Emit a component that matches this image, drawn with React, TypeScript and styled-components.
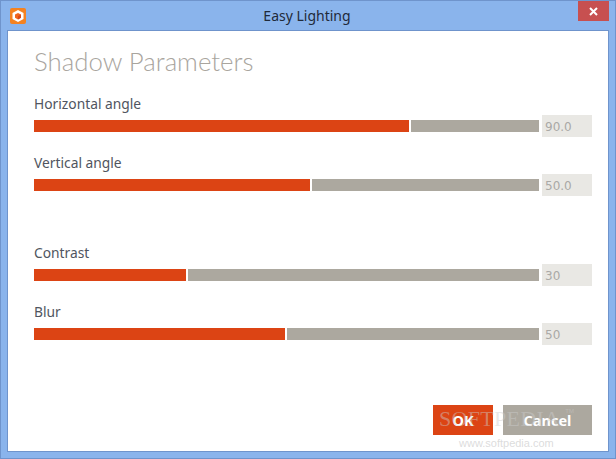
import React from 'react'
import styled, { createGlobalStyle } from 'styled-components'

const GlobalStyle = createGlobalStyle`
  html, body {
    margin: 0;
    padding: 0;
    background: #8ab4ec;
  }
`

type SliderProps = {
  label: string
  percent: number
  value: string
}

const Slider = (props: SliderProps) => (
  <SliderRow>
    <SliderLabel>{props.label}</SliderLabel>
    <SliderLine>
      <Track>
        <TrackFill style={{ width: `${props.percent}px` }} />
        <TrackRest />
      </Track>
      <ValueBox>{props.value}</ValueBox>
    </SliderLine>
  </SliderRow>
)

const App = () => {
  return (
    <>
      <GlobalStyle />
      <Window>
        <TitleBar>
          <AppIcon viewBox="0 0 16 16">
            <rect width="16" height="16" rx="2" fill="#f58220" />
            <path d="M8 2 L13.5 5 V11 L8 14 L2.5 11 V5 Z" fill="#ffffff" />
            <path d="M8 5 L11 6.6 V9.8 L8 11.6 L5 9.8 V6.6 Z" fill="#f0641e" />
            <path d="M8 8.2 L11 6.6 V9.8 L8 11.6 Z" fill="#d8481a" />
          </AppIcon>
          <Title>Easy Lighting</Title>
          <CloseButton>
            <svg width="9" height="9" viewBox="0 0 9 9">
              <path d="M1 1 L8 8 M8 1 L1 8" stroke="#ffffff" strokeWidth="2" />
            </svg>
          </CloseButton>
        </TitleBar>
        <Content>
          <Heading>Shadow Parameters</Heading>
          <SliderGroup>
            <Slider label="Horizontal angle" percent={375} value="90.0" />
            <Slider label="Vertical angle" percent={276} value="50.0" />
          </SliderGroup>
          <SliderGroup>
            <Slider label="Contrast" percent={152} value="30" />
            <Slider label="Blur" percent={251} value="50" />
          </SliderGroup>
          <Buttons>
            <DialogButton $primary>OK</DialogButton>
            <DialogButton>Cancel</DialogButton>
          </Buttons>
          <Watermark>
            <WatermarkName>SOFTPEDIA<WatermarkMark>TM</WatermarkMark></WatermarkName>
            <WatermarkUrl>www.softpedia.com</WatermarkUrl>
          </Watermark>
        </Content>
      </Window>
    </>
  )
}

const Window = styled.div`
  width: 616px;
  height: 459px;
  box-sizing: border-box;
  background: #8ab4ec;
  border: 1px solid #6f94cc;
  padding: 0 6px 6px;
  display: flex;
  flex-direction: column;
`

const TitleBar = styled.div`
  height: 29px;
  flex: none;
  display: flex;
  align-items: center;
  position: relative;
  padding-left: 3px;
`

const AppIcon = styled.svg`
  width: 16px;
  height: 16px;
  margin-top: 1px;
`

const Title = styled.div`
  flex: 1;
  text-align: center;
  font-family: "Noto Sans", "Liberation Sans", sans-serif;
  font-size: 14px;
  color: #1f2a3a;
  margin-right: 21px;
`

const CloseButton = styled.div`
  position: absolute;
  top: 0;
  right: 0;
  width: 31px;
  height: 20px;
  background: #c75050;
  display: flex;
  align-items: center;
  justify-content: center;
`

const Content = styled.div`
  flex: 1;
  background: #ffffff;
  border: 1px solid #6f94cc;
  padding: 0 16px 16px 26px;
  display: flex;
  flex-direction: column;
  position: relative;
`

const Heading = styled.h1`
  margin: 12px 0 0;
  font-family: Lato, "Open Sans", sans-serif;
  font-weight: 300;
  font-size: 25.8px;
  line-height: 36px;
  color: #a9a59e;
`

const SliderGroup = styled.div`
  display: flex;
  flex-direction: column;
  gap: 17px;
  margin-top: 16px;

  & + & {
    margin-top: 48px;
  }
`

const SliderRow = styled.div`
  display: flex;
  flex-direction: column;
`

const SliderLabel = styled.div`
  font-family: "Noto Sans", "Liberation Sans", sans-serif;
  font-size: 13.8px;
  line-height: 18px;
  margin-bottom: 2px;
  color: #505560;
`

const SliderLine = styled.div`
  display: flex;
  align-items: center;
  height: 22px;
`

const Track = styled.div`
  width: 505px;
  height: 12px;
  display: flex;
  gap: 2px;
  margin-right: 3px;
`

const TrackFill = styled.div`
  flex: none;
  background: #dc4414;
`

const TrackRest = styled.div`
  flex: 1;
  background: #aca89f;
`

const ValueBox = styled.div`
  width: 50px;
  height: 22px;
  box-sizing: border-box;
  padding-left: 3px;
  background: #e9e8e4;
  font-family: "DejaVu Sans", sans-serif;
  font-size: 12px;
  line-height: 24px;
  color: #aaa9a6;
`

const Buttons = styled.div`
  margin-top: auto;
  display: flex;
  justify-content: flex-end;
  gap: 10px;
`

const DialogButton = styled.div<{ $primary?: boolean }>`
  width: ${props => (props.$primary ? '60px' : '89px')};
  height: 30px;
  background: ${props => (props.$primary ? '#dc4414' : '#aca89f')};
  color: #ffffff;
  font-family: "Noto Sans", "Liberation Sans", sans-serif;
  font-weight: 700;
  font-size: 14.5px;
  line-height: 30px;
  text-align: center;
`

const Watermark = styled.div`
  position: absolute;
  left: 431px;
  top: 368px;
  pointer-events: none;
`

const WatermarkName = styled.div`
  font-family: "Liberation Serif", serif;
  font-size: 22px;
  line-height: 24px;
  letter-spacing: 0.3px;
  white-space: nowrap;
  color: rgba(205, 205, 205, 0.45);
`

const WatermarkMark = styled.span`
  font-family: "Liberation Sans", sans-serif;
  font-size: 6px;
  letter-spacing: 0;
  vertical-align: 13px;
  margin-left: 5px;
`

const WatermarkUrl = styled.div`
  font-family: "Liberation Sans", sans-serif;
  font-size: 11px;
  line-height: 14px;
  margin: 5px 0 0 20px;
  white-space: nowrap;
  color: rgba(190, 190, 190, 0.55);
`

export default App
